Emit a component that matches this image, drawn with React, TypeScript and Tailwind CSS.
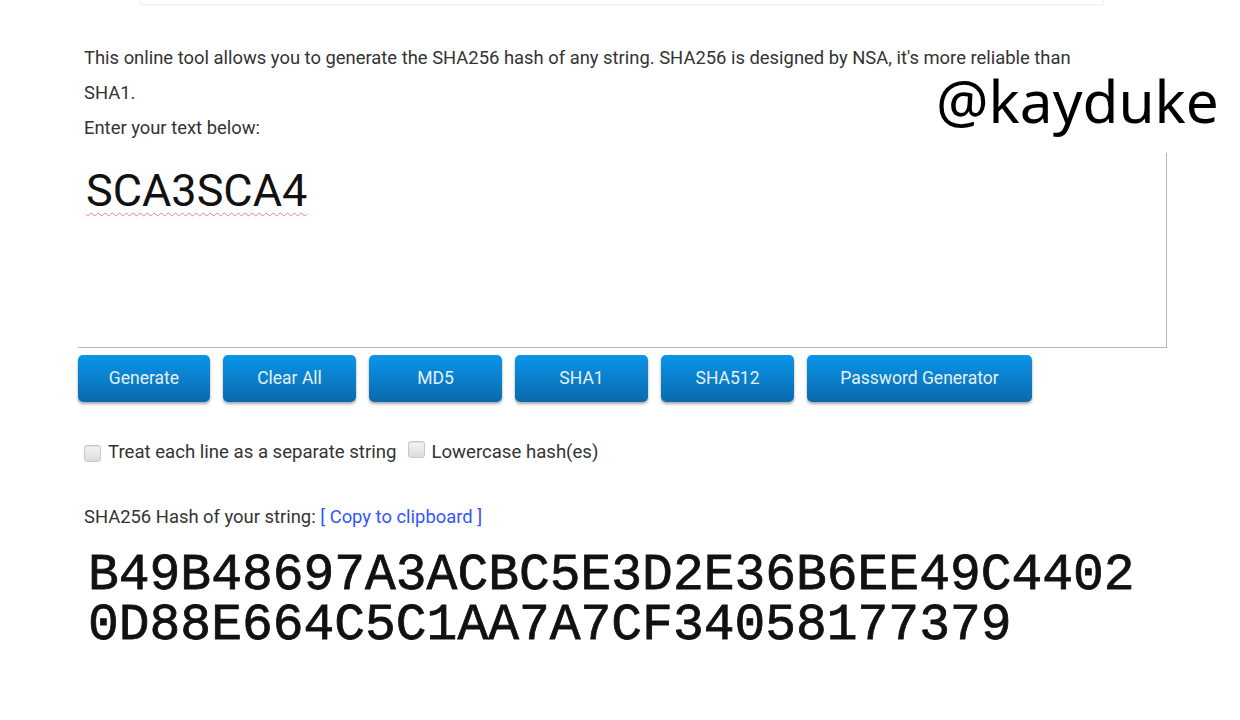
import React from "react";

const buttons = [
  { label: "Generate", w: "w-[132px]" },
  { label: "Clear All", w: "w-[133px]" },
  { label: "MD5", w: "w-[133px]" },
  { label: "SHA1", w: "w-[133px]" },
  { label: "SHA512", w: "w-[133px]" },
  { label: "Password Generator", w: "w-[225px]" },
];

function Checkbox() {
  return (
    <span className="inline-block w-[17px] h-[17px] rounded-[3px] border border-[#c8c8c8] bg-gradient-to-b from-[#f4f4f4] to-[#dcdcdc] shadow-[inset_0_1px_1px_rgba(0,0,0,0.08)]" />
  );
}

export default function App() {
  return (
    <div className="relative w-[1240px] h-[720px] bg-white overflow-hidden text-[#333] [font-family:Roboto,'Liberation_Sans',sans-serif]">
      {/* top faded box */}
      <div className="ml-[140px] w-[964px] h-[5px] border-b border-x border-[#f0f0f0] shadow-[0_1px_2px_rgba(0,0,0,0.03)]" />

      <div className="pl-[84px] pt-[35px] text-[18.4px] leading-[35px] w-[1090px]">
        <p>
          This online tool allows you to generate the SHA256 hash of any string. SHA256 is designed by NSA, it's more reliable than SHA1.
        </p>
        <p>Enter your text below:</p>
      </div>

      {/* textarea */}
      <div className="ml-[78px] mt-[8px] w-[1089px] h-[195px] border-r border-b border-[#b5b5b5] pl-[8px] pt-[12px]">
        <span className="text-[45px] leading-[52px] text-[#111] underline decoration-wavy decoration-[#f08080] decoration-1 underline-offset-[6px]">
          SCA3SCA4
        </span>
      </div>

      {/* buttons */}
      <div className="ml-[78px] mt-[7px] flex gap-[13px]">
        {buttons.map((b) => (
          <div
            key={b.label}
            className={`${b.w} h-[47px] rounded-[5px] bg-gradient-to-b from-[#0996ea] to-[#0a6aad] shadow-[0_2px_3px_rgba(0,0,0,0.35)] flex items-center justify-center text-[17.5px] text-[#e4f0fa]`}
          >
            {b.label}
          </div>
        ))}
      </div>

      {/* checkboxes */}
      <div className="ml-[84px] mt-[39px] flex items-center h-[24px] text-[18.6px] text-[#333]">
        <Checkbox />
        <span className="ml-[7px]">Treat each line as a separate string</span>
        <span className="ml-[12px]"><Checkbox /></span>
        <span className="ml-[6px]">Lowercase hash(es)</span>
      </div>

      <div className="ml-[84px] mt-[40px] h-[24px] leading-[24px] text-[18.4px] text-[#333]">
        SHA256 Hash of your string: <span className="text-[#3355ff]">[ Copy to clipboard ]</span>
      </div>

      <div className="ml-[88px] mt-[21px] text-[51.3px] leading-[50px] text-[#111] [-webkit-text-stroke:0.8px_#111] [font-family:'Liberation_Mono','Courier_New',monospace]">
        <div>B49B48697A3ACBC5E3D2E36B6EE49C4402</div>
        <div>0D88E664C5C1AA7A7CF34058177379</div>
      </div>

      {/* watermark overlay */}
      <div className="absolute left-[936px] top-[76px] text-[58.5px] leading-[48px] text-black [font-family:'Noto_Sans','Open_Sans',sans-serif]">
        @kayduke
      </div>
    </div>
  );
}
